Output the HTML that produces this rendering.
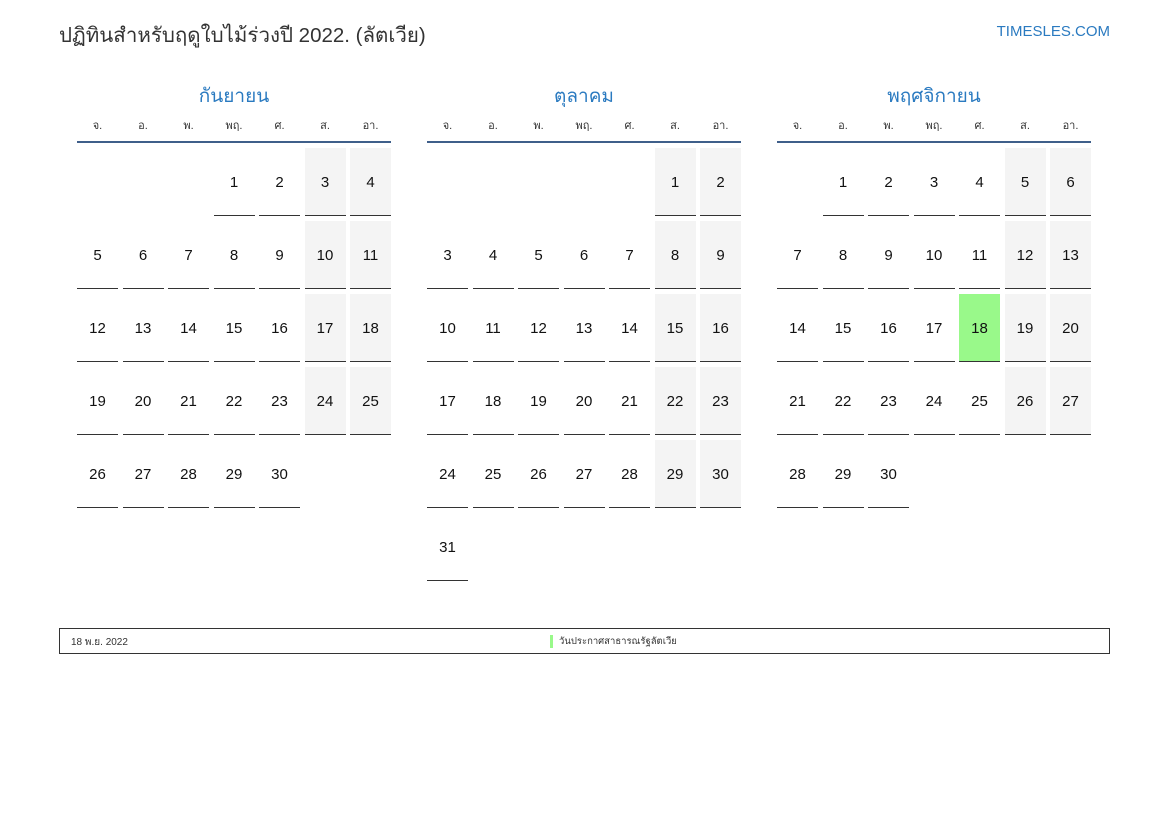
<!DOCTYPE html>
<html><head><meta charset="utf-8"><style>
body{margin:0;width:1169px;height:827px;background:#fff;font-family:"Liberation Sans","Noto Sans CJK SC",sans-serif;position:relative;overflow:hidden}
.title{position:absolute;left:59px;top:19px;font-size:20.5px;color:#333}
.site{position:absolute;right:59px;top:23px;font-size:15px;color:#2a7ac0}
.m{position:absolute;top:81px;width:314px}
.mt{text-align:center;font-size:19px;color:#2a7ac0;height:28px}
.dw{display:grid;grid-template-columns:repeat(7,41px);column-gap:4.5px;font-size:11px;color:#333;text-align:center;height:32px;line-height:34px;border-bottom:2px solid #3f5f8a}
.g{display:grid;grid-template-columns:repeat(7,41px);column-gap:4.5px;row-gap:5px;margin-top:5px;grid-auto-rows:68px}
.g div{box-sizing:border-box;border-bottom:1px solid #333;display:flex;align-items:center;justify-content:center;font-size:15px;color:#111;padding-top:1px}
.g div.e{border:none}
.g div.w{background:#f4f4f4}
.g div.h{background:#99f98a}
.leg{position:absolute;left:59px;top:628px;width:1049px;height:24px;border:1px solid #333;font-size:10px;color:#333}
.leg .a{position:absolute;left:11px;top:6px}
.leg .b{position:absolute;left:490px;top:6px;border-left:3px solid #99f98a;padding-left:6px;height:13px;line-height:13px;font-size:9.5px}
</style></head><body>
<div class="title">ปฏิทินสำหรับฤดูใบไม้ร่วงปี 2022. (ลัตเวีย)</div>
<div class="site">TIMESLES.COM</div>

<div class="m" style="left:77px">
<div class="mt">กันยายน</div>
<div class="dw"><span>จ.</span><span>อ.</span><span>พ.</span><span>พฤ.</span><span>ศ.</span><span>ส.</span><span>อา.</span></div>
<div class="g">
<div class="e"></div><div class="e"></div><div class="e"></div><div>1</div><div>2</div><div class="w">3</div><div class="w">4</div>
<div>5</div><div>6</div><div>7</div><div>8</div><div>9</div><div class="w">10</div><div class="w">11</div>
<div>12</div><div>13</div><div>14</div><div>15</div><div>16</div><div class="w">17</div><div class="w">18</div>
<div>19</div><div>20</div><div>21</div><div>22</div><div>23</div><div class="w">24</div><div class="w">25</div>
<div>26</div><div>27</div><div>28</div><div>29</div><div>30</div>
</div></div>

<div class="m" style="left:427px">
<div class="mt">ตุลาคม</div>
<div class="dw"><span>จ.</span><span>อ.</span><span>พ.</span><span>พฤ.</span><span>ศ.</span><span>ส.</span><span>อา.</span></div>
<div class="g">
<div class="e"></div><div class="e"></div><div class="e"></div><div class="e"></div><div class="e"></div><div class="w">1</div><div class="w">2</div>
<div>3</div><div>4</div><div>5</div><div>6</div><div>7</div><div class="w">8</div><div class="w">9</div>
<div>10</div><div>11</div><div>12</div><div>13</div><div>14</div><div class="w">15</div><div class="w">16</div>
<div>17</div><div>18</div><div>19</div><div>20</div><div>21</div><div class="w">22</div><div class="w">23</div>
<div>24</div><div>25</div><div>26</div><div>27</div><div>28</div><div class="w">29</div><div class="w">30</div>
<div>31</div>
</div></div>

<div class="m" style="left:777px">
<div class="mt">พฤศจิกายน</div>
<div class="dw"><span>จ.</span><span>อ.</span><span>พ.</span><span>พฤ.</span><span>ศ.</span><span>ส.</span><span>อา.</span></div>
<div class="g">
<div class="e"></div><div>1</div><div>2</div><div>3</div><div>4</div><div class="w">5</div><div class="w">6</div>
<div>7</div><div>8</div><div>9</div><div>10</div><div>11</div><div class="w">12</div><div class="w">13</div>
<div>14</div><div>15</div><div>16</div><div>17</div><div class="h">18</div><div class="w">19</div><div class="w">20</div>
<div>21</div><div>22</div><div>23</div><div>24</div><div>25</div><div class="w">26</div><div class="w">27</div>
<div>28</div><div>29</div><div>30</div>
</div></div>

<div class="leg"><span class="a">18 พ.ย. 2022</span><span class="b">วันประกาศสาธารณรัฐลัตเวีย</span></div>
</body></html>
